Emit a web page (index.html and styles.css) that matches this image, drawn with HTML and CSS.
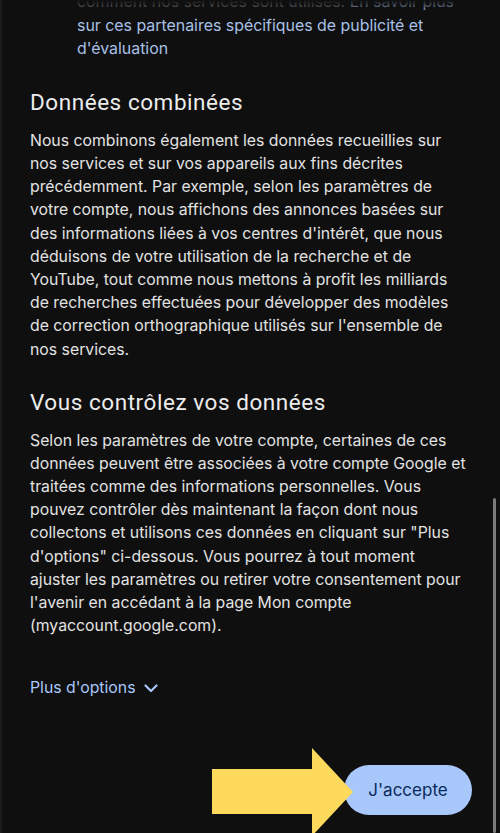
FILE: index.html
```html
<!DOCTYPE html>
<html lang="fr">
<head>
<meta charset="utf-8">
<title>Données combinées</title>
<link rel="stylesheet" href="styles.css">
</head>
<body>
<div class="screen">
  <main class="content">
    <p class="intro">
      <span class="muted">comment nos services sont utilisés.</span> <span class="link">En savoir plus</span><br>
      <span class="link">sur ces partenaires spécifiques de publicité et</span><br>
      <span class="link">d'évaluation</span>
    </p>

    <h2 class="title">Données combinées</h2>
    <p class="text">Nous combinons également les données recueillies sur<br>nos services et sur vos appareils aux fins décrites<br>précédemment. Par exemple, selon les paramètres de<br>votre compte, nous affichons des annonces basées sur<br>des informations liées à vos centres d'intérêt, que nous<br>déduisons de votre utilisation de la recherche et de<br>YouTube, tout comme nous mettons à profit les milliards<br>de recherches effectuées pour développer des modèles<br>de correction orthographique utilisés sur l'ensemble de<br>nos services.</p>

    <h2 class="title title-second">Vous contrôlez vos données</h2>
    <p class="text">Selon les paramètres de votre compte, certaines de ces<br>données peuvent être associées à votre compte Google et<br>traitées comme des informations personnelles. Vous<br>pouvez contrôler dès maintenant la façon dont nous<br>collectons et utilisons ces données en cliquant sur "Plus<br>d'options" ci-dessous. Vous pourrez à tout moment<br>ajuster les paramètres ou retirer votre consentement pour<br>l'avenir en accédant à la page Mon compte<br>(myaccount.google.com).</p>

    <div class="more">
      <span>Plus d'options</span>
      <svg class="chev" width="16" height="16" viewBox="0 0 16 16" aria-hidden="true">
        <path d="M2.5 5.5 L8 11 L13.5 5.5" fill="none" stroke="#a8c7fa" stroke-width="2.2" stroke-linecap="round" stroke-linejoin="round"/>
      </svg>
    </div>

    <div class="actions">
      <button class="accept">J'accepte</button>
    </div>
  </main>

  <div class="fade"></div>
  <div class="scrollbar"></div>

  <svg class="arrow" width="145" height="90" viewBox="0 0 145 90" aria-hidden="true">
    <polygon points="0,21 100,21 100,0 141,44 100,88 100,66 0,66" fill="#fdd95c"/>
  </svg>
</div>
</body>
</html>
```

FILE: styles.css
```css
html, body {
  margin: 0;
  padding: 0;
  background: #101010;
}

.screen {
  position: relative;
  width: 500px;
  height: 833px;
  overflow: hidden;
  background: #0f0f0f;
  border-left: 2px solid #1c1c1c;
  box-sizing: border-box;
  font-family: Inter, "Noto Sans", sans-serif;
}

.content {
  padding: 0 28px 0 28px;
  display: flex;
  flex-direction: column;
}

.intro {
  margin: -9.6px 0 0 0;
  padding-left: 47px;
  font-size: 15.9px;
  line-height: 23.2px;
  white-space: nowrap;
}

.muted {
  color: #8a8d92;
}

.link {
  color: #a8c0e6;
}

.title {
  margin: 28.4px 0 0 0;
  font-family: Roboto, "Noto Sans", sans-serif;
  font-weight: 400;
  font-size: 22.5px;
  line-height: 28px;
  color: #ececec;
  letter-spacing: 0.55px;
}

.title-second {
  margin-top: 27.4px;
}

.text {
  margin: 12.4px 0 0 0;
  font-size: 15.8px;
  line-height: 23.2px;
  color: #e2e2e2;
  white-space: nowrap;
}

.more {
  margin-top: 38px;
  display: flex;
  align-items: center;
  gap: 7px;
  height: 24px;
  font-size: 15.8px;
  color: #a8c7fa;
}

.chev {
  display: block;
  margin-top: 1px;
}

.actions {
  margin-top: 66px;
  display: flex;
  justify-content: flex-end;
  padding-right: 0;
}

.accept {
  width: 128px;
  height: 50px;
  border: none;
  border-radius: 25px;
  background: #a8c7fa;
  color: #0b2a5c;
  font-family: Inter, "Noto Sans", sans-serif;
  font-size: 17px;
  font-weight: 400;
  padding: 0;
}

.fade {
  position: absolute;
  left: 0;
  top: 0;
  width: 100%;
  height: 12px;
  background: linear-gradient(#0f0f0f 0%, rgba(15, 15, 15, 0.5) 60%, rgba(15, 15, 15, 0) 100%);
}

.scrollbar {
  position: absolute;
  right: 4px;
  top: 498px;
  width: 3px;
  height: 335px;
  border-radius: 2px;
  background: #7a7a7a;
}

.arrow {
  position: absolute;
  left: 210px;
  top: 748px;
}
```
